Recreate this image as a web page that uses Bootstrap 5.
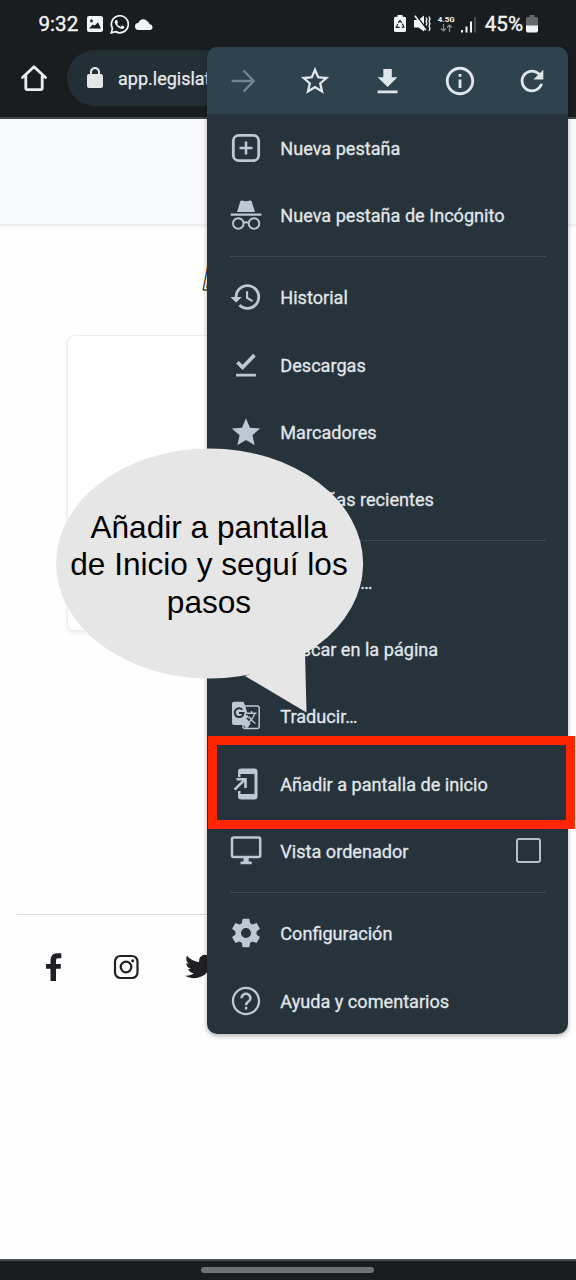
<!DOCTYPE html>
<html lang="es">
<head>
<meta charset="utf-8">
<meta name="viewport" content="width=device-width, initial-scale=1">
<title>Añadir a pantalla de inicio</title>
<link href="https://cdn.jsdelivr.net/npm/bootstrap@5.3.0/dist/css/bootstrap.min.css" rel="stylesheet">
<style>
body{font-family:Roboto,"Noto Sans",sans-serif;background:#fefefe;overflow:hidden}
svg{display:block;flex:none}
.phone{width:576px;height:1280px}
.statusbar{height:48px;background:#1a1d20;color:#f3f4f5;padding:0 38px 0 38.5px}
.clock{font-size:20.6px;line-height:48px;font-weight:400;-webkit-text-stroke:.35px}
.net{font-size:8px;line-height:8px;font-weight:700;width:18px}
.toolbar{height:71px;background:#1a1d20;border-bottom:2px solid #45474a;padding:2px 20px 0 17px}
.url{height:56px;margin-left:16px;border-radius:28px;background:#242f35;color:#e8eaed;font-size:18px;padding-left:16px;-webkit-text-stroke:.25px}
.site-head{height:105px;background:#f8f9fb;box-shadow:0 1px 4px rgba(0,0,0,.13)}
.site-title{height:111px;padding:33px 0 0 202px;font-size:35px;line-height:42px;font-style:italic;color:#fff;-webkit-text-stroke:1px #000;font-family:"Liberation Sans",sans-serif}
.panel{width:442px;height:296px;border:1px solid #ececee;border-radius:8px;background:#fff;box-shadow:0 2px 4px rgba(0,0,0,.08);margin:0 auto}
.site-foot{margin:283px 17px 0;border-top:1px solid #d9dadd;color:#202127;padding:37px 0 0 29px}
.navpill{height:21px;background:#1a1d1f;border-top:2px solid #474f4e;padding:0 1px 2px 0}
.navpill span{width:173px;height:6px;border-radius:3px;background:#6e7275}
.menu-sheet{left:207px;top:47px;width:361px;height:987px;border-radius:10px;background:#26333b;color:#e2e6ea;overflow:hidden}
.menu-shade{left:207px;top:47px;width:361px;height:987px;border-radius:10px;box-shadow:0 2px 5px rgba(0,0,0,.3)}
.menu-top{height:67px;background:#2e434d;color:#dfe6ec}
.menu-line{height:67.33px;padding:0 27px 0 22px;gap:17.3px;font-size:18.11px;-webkit-text-stroke:.3px}
.menu-line span{padding-top:1px}
.menu-line svg,.menu-line .gap-icon{width:34px;height:34px;color:#bdc8d2;flex:none;-webkit-text-stroke:0}
.sep{height:15px;padding:7px 22px 0 23px}
.sep div{height:1.4px;background:#3f4b53}
.tick{width:25px;height:25px;border:2.4px solid #b3bfc9;border-radius:3px}
.focusbox{left:207.500px;top:736px;width:367px;height:93px;border:9.5px solid #ff2600}
.bubble{left:56px;top:448px;width:308px;height:266px}
.bubble p{left:0;top:61px;width:306px;font:31.6px/37.3px "Liberation Sans",Arial,sans-serif;color:#000}
</style>
</head>
<body>
<div class="phone position-relative d-flex flex-column overflow-hidden">
  <header class="statusbar d-flex align-items-center">
    <span class="clock">9:32</span>
    <svg width="16" height="16" viewBox="0 0 16 16" style="margin-left:9px"><path fill="#f3f4f5" fill-rule="evenodd" d="M2 0h12a2 2 0 0 1 2 2v12a2 2 0 0 1-2 2H2a2 2 0 0 1-2-2V2a2 2 0 0 1 2-2zM2 12.500h12L11 6.200 7.800 9.600 5.800 8.600zM4.500 3.600a1.400 1.400 0 1 0 0 2.800 1.400 1.400 0 0 0 0-2.800z"/></svg>
    <svg width="19" height="19" viewBox="0 0 24 24" fill="#f3f4f5" style="margin-left:7px"><path d="M17.472 14.382c-.297-.149-1.758-.867-2.030-.967-.273-.099-.471-.148-.670.150-.197.297-.767.966-.940 1.164-.173.199-.347.223-.644.075-.297-.150-1.255-.463-2.390-1.475-.883-.788-1.480-1.761-1.653-2.059-.173-.297-.018-.458.130-.606.134-.133.298-.347.446-.520.149-.174.198-.298.298-.497.099-.198.050-.371-.025-.520-.075-.149-.669-1.612-.916-2.207-.242-.579-.487-.500-.669-.510-.173-.008-.371-.010-.570-.010-.198 0-.520.074-.792.372-.272.297-1.040 1.016-1.040 2.479 0 1.462 1.065 2.875 1.213 3.074.149.198 2.096 3.200 5.077 4.487.709.306 1.262.489 1.694.625.712.227 1.360.195 1.871.118.571-.085 1.758-.719 2.006-1.413.248-.694.248-1.289.173-1.413-.074-.124-.272-.198-.570-.347"/><path fill="none" stroke="#f3f4f5" stroke-width="2.200" d="M1.600 22.400l1.500-5.500A10.700 10.700 0 1 1 7.200 21z"/></svg>
    <svg width="19" height="13" viewBox="0 0 19 13" style="margin-left:6px"><path fill="#f3f4f5" d="M3.600 12a3.500 3.500 0 0 1-.2-7A5 5 0 0 1 12.300 3.300a4 4 0 0 1 2.200 2.900A3 3 0 0 1 15.600 12z"/></svg>
    <span class="flex-grow-1"></span>
    <svg width="12" height="18" viewBox="0 0 12 18"><path fill="#f3f4f5" d="M3.500 0h5v1.700h2Q12 1.700 12 3.200v12.300Q12 17 10.500 17h-9Q0 17 0 15.500V3.200Q0 1.700 1.500 1.700h2z"/><path fill="none" stroke="#1a1d20" stroke-width="1.200" d="M4.200 7.900L6 5.500l1.800 2.400M8.300 8.700l1.600 3.300-2.200.3M5.700 12.300H2.300l1.400-3.100"/></svg>
    <svg width="18" height="18" viewBox="0 0 18 18" style="margin-left:8px"><path fill="#f3f4f5" d="M0 5h4.500l5.500-4.500v16L4.500 12.500H0z"/><path stroke="#1a1d20" stroke-width="1.400" d="M2 0l11 14.500"/><path stroke="#f3f4f5" stroke-width="1.600" d="M.8 .8l11 14.500"/><path fill="none" stroke="#f3f4f5" stroke-width="1.300" d="M12 2.500l1 2-1 2 1 2-1 2M15 1.500l1 2.500-1 2.300 1 2.400-1 2.400 1 2.400-1 2.500"/></svg>
    <div class="net" style="margin-left:6px">4.5G
      <svg width="16" height="8" viewBox="0 0 16 8" fill="none" stroke="#8a8d90" stroke-width="1.200"><path d="M5.500 0v7M3 4.500L5.500 7 8 4.500M11.500 8V1M9 3.500L11.500 1 14 3.500"/></svg></div>
    <svg width="16" height="17" viewBox="0 0 16 17" style="margin-left:5px"><path fill="#f3f4f5" d="M0 14h2v2.500H0zM4.500 10.500h2v6h-2zM9 5.500h2v11H9z"/><path fill="#5c5f62" d="M13.300 1h1.500v15.500h-1.500z"/></svg>
    <span class="clock" style="margin-left:8px">45%</span>
    <svg width="12" height="18" viewBox="0 0 12 18" style="margin-left:3px"><path fill="#66696b" d="M3.500 0h5v2h2Q12 2 12 3.500V11H0V3.500Q0 2 1.500 2h2z"/><path fill="#f3f4f5" d="M0 10.500h12v5Q12 17.500 10.500 17.500h-9Q0 17.500 0 15.500z"/></svg>
  </header>
  <div class="toolbar d-flex">
    <svg width="34" height="56" viewBox="0 0 34 56" fill="none" stroke="#eceef0" stroke-width="2.800" stroke-linejoin="round" stroke-linecap="round"><path d="M5.500 27.500L17 16.800l11.500 10.700M8.800 26v12.600q0 1 1 1h14.400q1 0 1-1V26"/></svg>
    <div class="url flex-grow-1 d-flex align-items-center">
      <svg width="24" height="24" viewBox="0 0 24 24" fill="#e3e6e9"><path fill-rule="evenodd" d="M18 8h-1V6c0-2.760-2.240-5-5-5S7 3.240 7 6v2H6c-1.100 0-2 .9-2 2v10c0 1.100.9 2 2 2h12c1.100 0 2-.9 2-2V10c0-1.100-.9-2-2-2zM9 6c0-1.710 1.290-3.100 3-3.100S15 4.290 15 6v2H9z"/></svg>
      <span style="margin-left:11px">app.legislatura</span>
    </div>
  </div>
  <main class="flex-grow-1">
    <div class="site-head"></div>
    <div class="site-title">L</div>
    <div class="panel"></div>
    <footer class="site-foot d-flex align-items-center">
      <svg width="16" height="28" viewBox="0 0 16 28" fill="currentColor"><path d="M0 11h4.500V8C4.500 3 7 .3 11 .3h4.300v4.900h-3C10.700 5.200 10 6 10 7.600V11h4.800v4.700H10V28H4.500V15.700H0z"/></svg>
      <svg width="26" height="26" viewBox="0 0 26 26" fill="none" stroke="currentColor" stroke-width="2.200" style="margin-left:51px"><rect x="2" y="2" width="22.500" height="22" rx="5.500"/><circle cx="13" cy="13" r="5.300"/><circle cx="19.700" cy="6.700" r="1.500" fill="currentColor" stroke="none"/></svg>
      <svg width="29" height="29" viewBox="0 0 512 512" fill="currentColor" style="margin-left:46px"><path d="M459.370 151.716c.325 4.548.325 9.097.325 13.645 0 138.720-105.583 298.558-298.558 298.558-59.452 0-114.680-17.219-161.137-47.106 8.447.974 16.568 1.299 25.340 1.299 49.055 0 94.213-16.568 130.274-44.832-46.132-.975-84.792-31.188-98.112-72.772 6.498.974 12.995 1.624 19.818 1.624 9.421 0 18.843-1.300 27.614-3.573-48.081-9.747-84.143-51.980-84.143-102.985v-1.299c13.969 7.797 30.214 12.670 47.431 13.319-28.264-18.843-46.781-51.005-46.781-87.391 0-19.492 5.197-37.360 14.294-52.954 51.655 63.675 129.300 105.258 216.365 109.807-1.624-7.797-2.599-15.918-2.599-24.040 0-57.828 46.782-104.934 104.934-104.934 30.213 0 57.502 12.670 76.670 33.137 23.715-4.548 46.456-13.320 66.599-25.340-7.798 24.366-24.366 44.833-46.132 57.827 21.117-2.273 41.584-8.122 60.426-16.243-14.292 20.791-32.161 39.308-52.628 54.253z"/></svg>
    </footer>
  </main>
  <div class="navpill d-flex justify-content-center align-items-center"><span></span></div>

  <div class="menu-shade position-absolute"></div>
  <nav class="menu-sheet position-absolute">
    <div class="menu-top row g-0 align-items-center">
      <div class="col d-flex justify-content-center"><svg width="34" height="34" viewBox="0 0 24 24" fill="none" stroke="#70838f" stroke-width="1.700"><path d="M4 12h15M12.300 4.500l7.300 7.500-7.300 7.500"/></svg></div>
      <div class="col d-flex justify-content-center"><svg width="34" height="34" viewBox="0 0 24 24" fill="currentColor"><path d="M22 9.240l-7.190-.62L12 2 9.190 8.630 2 9.240l5.460 4.730L5.820 21 12 17.270 18.180 21l-1.630-7.030L22 9.240zM12 15.400l-3.760 2.270 1-4.280-3.320-2.880 4.380-.38L12 6.100l1.710 4.040 4.380.38-3.320 2.880 1 4.280L12 15.400z"/></svg></div>
      <div class="col d-flex justify-content-center"><svg width="34" height="34" viewBox="0 0 24 24" fill="currentColor"><path d="M18.700 9.300h-4V3.500H8.700v5.800h-4l7 7 7-7zM4.700 18.700v2h14v-2z"/></svg></div>
      <div class="col d-flex justify-content-center"><svg width="34" height="34" viewBox="0 0 24 24" fill="currentColor"><path d="M11 7h2v2h-2zm0 4h2v6h-2zm1-9C6.480 2 2 6.480 2 12s4.480 10 10 10 10-4.480 10-10S17.520 2 12 2zm0 18c-4.410 0-8-3.590-8-8s3.590-8 8-8 8 3.590 8 8-3.590 8-8 8z"/></svg></div>
      <div class="col d-flex justify-content-center"><svg width="34" height="34" viewBox="0 0 24 24" fill="currentColor"><path d="M17.650 6.350C16.200 4.900 14.210 4 12 4c-4.420 0-7.990 3.580-7.990 8s3.570 8 7.990 8c3.730 0 6.840-2.550 7.730-6h-2.080c-.82 2.330-3.040 4-5.650 4-3.310 0-6-2.690-6-6s2.690-6 6-6c1.660 0 3.140.69 4.220 1.780L13 11h7V4l-2.350 2.350z"/></svg></div>
    </div>
    <div class="menu-line d-flex align-items-center"><svg viewBox="0 0 34 34" fill="none" stroke="currentColor"><rect x="4.300" y="4.300" width="25.400" height="25.400" rx="5.500" stroke-width="2.800"/><path stroke-width="2.600" d="M17 10.500v13M10.500 17h13"/></svg><span>Nueva pestaña</span></div>
    <div class="menu-line d-flex align-items-center"><svg viewBox="0 0 34 34" fill="currentColor"><path d="M8 14L11.300 3.500q.5-1.400 1.800-1 3.900 1.300 7.800 0 1.300-.4 1.800 1L26 14zM1.700 15.500h30.700v2.200H1.700z"/><g fill="none" stroke="currentColor" stroke-width="1.900"><circle cx="9.300" cy="25.500" r="5.300"/><circle cx="25" cy="25.500" r="5.300"/><path d="M14.500 25q2.600-1.400 5.200 0"/></g></svg><span>Nueva pestaña de Incógnito</span></div>
    <div class="sep"><div></div></div>
    <div class="menu-line d-flex align-items-center"><svg viewBox="0 0 24 24" fill="currentColor"><path d="M13 3c-4.970 0-9 4.030-9 9H1l3.890 3.890.07.14L9 12H6c0-3.870 3.130-7 7-7s7 3.130 7 7-3.130 7-7 7c-1.930 0-3.680-.79-4.940-2.060l-1.420 1.420C8.270 19.990 10.510 21 13 21c4.970 0 9-4.030 9-9s-4.030-9-9-9zm-1 5v5l4.280 2.540.72-1.210-3.500-2.080V8H12z"/></svg><span>Historial</span></div>
    <div class="menu-line d-flex align-items-center"><svg viewBox="0 0 24 24" fill="currentColor"><path d="M5 18.200h14v1.900H5zM9.600 15.600L5 11 6.900 9.100l2.700 2.700 7.400-7.700 1.900 1.900z"/></svg><span>Descargas</span></div>
    <div class="menu-line d-flex align-items-center"><svg viewBox="0 0 24 24" fill="currentColor"><path d="M12 17.570L18.180 21.300l-1.640-7.030L22 9.540l-7.190-.61L12 2.300 9.190 8.930 2 9.540l5.460 4.730L5.820 21.300z"/></svg><span>Marcadores</span></div>
    <div class="menu-line d-flex align-items-center"><span class="gap-icon"></span><span>Pestañas recientes</span></div>
    <div class="sep"><div></div></div>
    <div class="menu-line d-flex align-items-center"><span class="gap-icon"></span><span>Compartir…</span></div>
    <div class="menu-line d-flex align-items-center"><span class="gap-icon"></span><span>Buscar en la página</span></div>
    <div class="menu-line d-flex align-items-center"><svg viewBox="0 0 34 34"><rect x="14" y="7" width="16.200" height="22.500" rx="2" fill="none" stroke="currentColor" stroke-width="1.500"/><path fill="currentColor" d="M5 2.700h9.500l1.600 4L21.500 25l-4 5-2.700-4H5q-2 0-2-2V4.700q0-2 2-2z"/><path fill="none" stroke="#26333b" stroke-width="2" d="M13.300 10.600a4.400 4.400 0 1 0 1.200 3.500H10"/><path fill="none" stroke="#26333b" stroke-width="1.600" d="M17 15.500h4M18 19l3.500 4"/><path fill="none" stroke="currentColor" stroke-width="1.400" d="M17.500 14.200h10M22.500 12v2.200M25.800 14.200q-1.500 6-7.300 10M20 17.500q2 4 6.500 7"/></svg><span>Traducir…</span></div>
    <div class="menu-line d-flex align-items-center"><svg viewBox="0 0 34 34" fill="currentColor"><path fill-rule="evenodd" d="M9 1.500h16.500q3 0 3 3v25q0 3-3 3H12q-3 0-3-3v-5.500h2.500v3h14V7h-14v3H9V4.500q0-3 3-3z"/><path fill="none" stroke="currentColor" stroke-width="2.600" d="M5.600 22.600L16 12.400M7.500 12.200h9v8.800"/></svg><span>Añadir a pantalla de inicio</span></div>
    <div class="menu-line d-flex align-items-center"><svg viewBox="0 0 34 34"><rect x="3" y="3.500" width="28.200" height="19.500" rx="1.500" fill="none" stroke="currentColor" stroke-width="2.500"/><path fill="currentColor" d="M14.500 23.500h5.200v4h3v2.800H11.500v-2.800h3z"/></svg><span class="flex-grow-1">Vista ordenador</span><span class="tick"></span></div>
    <div class="sep"><div></div></div>
    <div class="menu-line d-flex align-items-center"><svg viewBox="0 0 24 24" fill="currentColor"><path d="M19.430 12.980c.04-.32.07-.64.07-.98s-.03-.66-.07-.98l2.110-1.650c.19-.15.24-.42.12-.64l-2-3.460c-.12-.22-.39-.3-.61-.22l-2.490 1c-.52-.4-1.080-.73-1.690-.98l-.38-2.650C14.460 2.180 14.250 2 14 2h-4c-.25 0-.46.18-.49.42l-.38 2.650c-.61.25-1.170.59-1.690.98l-2.490-1c-.23-.09-.49 0-.61.22l-2 3.460c-.13.22-.07.49.12.64l2.110 1.650c-.04.32-.07.65-.07.98s.03.66.07.98l-2.110 1.650c-.19.15-.24.42-.12.64l2 3.460c.12.22.39.3.61.22l2.490-1c.52.4 1.080.73 1.690.98l.38 2.650c.03.24.24.42.49.42h4c.25 0 .46-.18.49-.42l.38-2.650c.61-.25 1.170-.59 1.690-.98l2.490 1c.23.09.49 0 .61-.22l2-3.460c.12-.22.07-.49-.12-.64l-2.110-1.650zM12 15.500c-1.930 0-3.500-1.570-3.500-3.500s1.570-3.500 3.500-3.500 3.500 1.570 3.500 3.500-1.570 3.500-3.500 3.500z"/></svg><span>Configuración</span></div>
    <div class="menu-line d-flex align-items-center"><svg viewBox="0 0 24 24" fill="currentColor"><path d="M11.200 18h1.700v-1.900h-1.700V18zM12 2C6.480 2 2 6.480 2 12s4.480 10 10 10 10-4.480 10-10S17.520 2 12 2zm0 18.400c-4.630 0-8.400-3.770-8.400-8.400S7.370 3.600 12 3.600s8.400 3.770 8.400 8.400-3.770 8.400-8.400 8.400zM12 6c-2.210 0-4 1.790-4 4h1.800c0-1.210.99-2.200 2.200-2.200s2.200.99 2.200 2.200c0 2-3 1.750-3 5h1.800c0-2.250 3-2.500 3-5 0-2.210-1.790-4-4-4z"/></svg><span>Ayuda y comentarios</span></div>
  </nav>
  <div class="focusbox position-absolute"></div>
  <div class="bubble position-absolute">
    <svg width="308" height="266" viewBox="0 0 308 266" fill="#e6e6e6"><ellipse cx="153.600" cy="115.500" rx="153.500" ry="115"/><path d="M189 228l61.500 36.500-1.500-60z"/></svg>
    <p class="position-absolute text-center m-0">Añadir a pantalla<br>de Inicio y seguí los<br>pasos</p>
  </div>
</div>
<script src="https://cdn.jsdelivr.net/npm/bootstrap@5.3.0/dist/js/bootstrap.bundle.min.js"></script>
</body>
</html>
